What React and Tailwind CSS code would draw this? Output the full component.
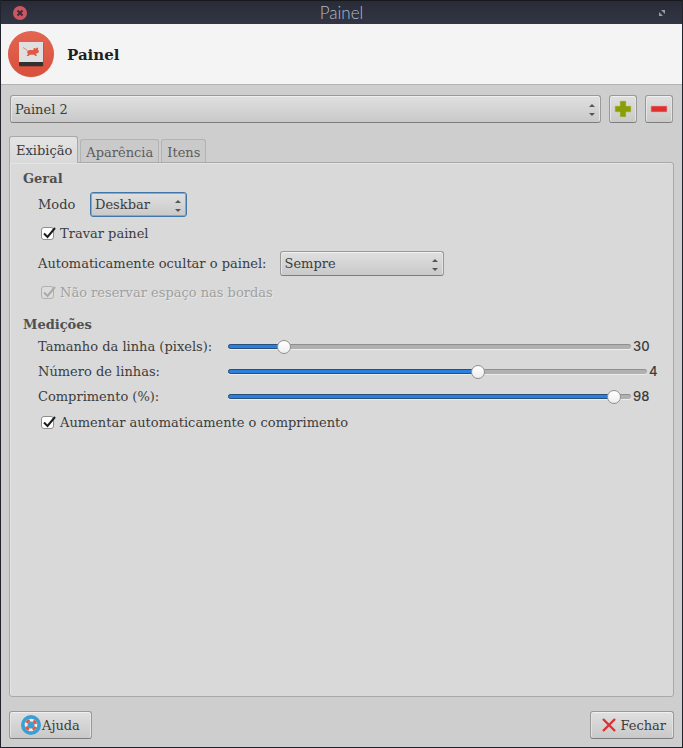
import { useState } from "react";

const BUTTON =
  "rounded-[3px] border border-[#999] border-b-[#7d7d7d] bg-linear-to-b from-[#e0e0e0] to-[#c9c9c9] shadow-[inset_0_1px_0_#f0f0f0,inset_1px_0_0_#e4e4e4,inset_-1px_0_0_#e4e4e4]";

function Select({ id, label, options, className, focused }) {
  return (
    <div className={`relative ${className}`}>
      <select
        id={id}
        aria-label={label}
        className={`${BUTTON} block h-full w-full appearance-none pr-5 pl-1 text-[#3c3c3c] outline-none ${
          focused ? "border-[#4177a8] border-b-[#4177a8] ring-1 ring-[#86a9c8] ring-inset" : ""
        }`}
      >
        {options.map((o) => (
          <option key={o}>{o}</option>
        ))}
      </select>
      <svg
        viewBox="0 0 6 12"
        className="pointer-events-none absolute top-[2px] right-[6px] bottom-0 my-auto h-3 w-[6px]"
        fill="#555"
      >
        <path d="M0 3 L3 0 L6 3Z" />
        <path d="M0 9 L3 12 L6 9Z" />
      </svg>
    </div>
  );
}

function Check({ label, disabled }) {
  const [on, setOn] = useState(true);
  return (
    <label
      className={`flex h-5 items-center gap-[6px] pl-[18px] ${
        disabled ? "text-[#a0a0a0] [text-shadow:1px_1px_0_#e8e8e8]" : ""
      }`}
    >
      <span className="relative block size-[13px]">
        <input
          type="checkbox"
          checked={on}
          disabled={disabled}
          onChange={() => setOn(!on)}
          className="block size-[13px] appearance-none rounded-[3px] border border-[#8e8e8e] bg-white disabled:border-[#b0b0b0] disabled:bg-[#dcdcdc]"
        />
        {on && (
          <svg
            viewBox="0 0 14 14"
            className="pointer-events-none absolute top-0 left-px size-[14px]"
            fill="none"
            stroke={disabled ? "#aaa" : "#1c1c1c"}
            strokeWidth="2"
          >
            <path d="M2 6.5 L5.5 10 L13 1" />
          </svg>
        )}
      </span>
      {label}
    </label>
  );
}

function Slider({ id, label, min, max, initial, valueWidth }) {
  const [value, setValue] = useState(initial);
  const ratio = (value - min) / (max - min);
  const edge = `calc(7px + (100% - 14px) * ${ratio})`;
  return (
    <div className="flex h-[25px] items-center pr-[3px] pl-[15px]">
      <label htmlFor={id} className="w-[190px] shrink-0">
        {label}
      </label>
      <div className="relative flex h-[14px] min-w-0 flex-1 items-center">
        <div className="h-[5px] w-full overflow-hidden rounded-full border-t border-[#8f8f8f] bg-[#b0b0b0] shadow-[0_1px_0_#ececec]" />
        <div
          className="absolute left-0 h-[5px] rounded-l-full border border-[#27517c] bg-[#2a80da]"
          style={{ width: edge }}
        />
        <input
          id={id}
          type="range"
          min={min}
          max={max}
          value={value}
          onChange={(e) => setValue(Number(e.target.value))}
          className="absolute inset-0 h-[14px] w-full appearance-none bg-transparent [&::-webkit-slider-thumb]:size-[14px] [&::-webkit-slider-thumb]:appearance-none [&::-webkit-slider-thumb]:rounded-full [&::-webkit-slider-thumb]:border [&::-webkit-slider-thumb]:border-[#8d8d8d] [&::-webkit-slider-thumb]:bg-white [&::-webkit-slider-thumb]:bg-linear-to-b [&::-webkit-slider-thumb]:from-white [&::-webkit-slider-thumb]:to-[#eee]"
        />
      </div>
      <output
        htmlFor={id}
        className={`${valueWidth} shrink-0 pl-[2px] font-['Inter','Liberation_Sans',sans-serif] font-medium`}
      >
        {value}
      </output>
    </div>
  );
}

function AppIcon() {
  return (
    <svg viewBox="1 0 48 48" className="size-12">
      <defs>
        <linearGradient id="disc" x1="0" y1="0" x2="0" y2="1">
          <stop offset="0" stopColor="#e26552" />
          <stop offset="1" stopColor="#d9503c" />
        </linearGradient>
      </defs>
      <circle cx="25" cy="24.5" r="23" fill="#d2d2d2" />
      <circle cx="25" cy="24" r="23" fill="url(#disc)" />
      <rect x="13.5" y="13" width="24" height="24" rx="1" fill="#b34433" />
      <path d="M13 12H37V32H13Z" fill="#dfdfdf" />
      <path d="M13 32H37V35Q37 36 36 36H14Q13 36 13 35Z" fill="#2e332f" />
      <path
        d="M21.5 21 Q22.5 20 24.5 20 H27.5 Q27 17.8 28.5 18 Q29.5 18 30 19 Q30 17.3 31.5 17.5 Q32.6 18 32 19.5 L33 21.5 Q32.8 23 31 23.2 L30 24 L31 26 H29.5 L28 24.8 H24 L22.5 26 H20.5 L22 24.2 Q20.8 23 21.5 21Z"
        fill="#df5a46"
      />
      <path d="M22 22 Q21.5 19.5 17 17.5" fill="none" stroke="#df8a7c" strokeWidth="1" />
    </svg>
  );
}

export default function App() {
  return (
    <main className="flex min-h-screen flex-col border-x border-b border-[#20232c] bg-[#cecece] font-['DejaVu_Serif','Liberation_Serif',serif] text-[13px] leading-[17px] text-[#3c3c3c]">
      <div className="flex h-6 items-center justify-between border-t border-[#171a1d] bg-linear-to-b from-[#292c37] to-[#323644] px-3">
        <button type="button" aria-label="Fechar janela" className="w-4">
          <svg viewBox="0 0 14 14" className="size-[14px]">
            <circle cx="7" cy="7" r="7" fill="#cb5560" />
            <path d="M4.5 4.5 L9.5 9.5 M9.5 4.5 L4.5 9.5" stroke="#3a2a35" strokeWidth="1.8" />
          </svg>
        </button>
        <h1 className="font-['Lato',sans-serif] text-[17px] leading-5 font-light text-[#b4bbc8]">Painel</h1>
        <button type="button" aria-label="Maximizar" className="flex w-4 justify-center">
          <svg viewBox="0 0 6 6" className="size-[6px]" fill="#979ca8">
            <path d="M2 0H6V4Z" />
            <path d="M0 2V6H4Z" />
          </svg>
        </button>
      </div>

      <header className="flex h-[61px] items-center gap-3 border-b border-[#b4b4b4] bg-[#f4f4f4] pl-[6px]">
        <AppIcon />
        <h2 className="pt-[2px] text-[15px] leading-5 font-bold text-[#1f1f1f]">Painel</h2>
      </header>

      <div className="flex flex-1 flex-col px-2 pb-2">
        <div className="mt-[10px] flex h-7 gap-2 px-px">
          <Select id="painel" label="Painel" options={["Painel 2", "Painel 1"]} className="flex-1" />
          <button type="button" aria-label="Adicionar painel" className={`${BUTTON} flex w-7 items-center justify-center`}>
            <svg viewBox="0 0 18 18" className="size-[18px]">
              <path d="M6 1H12V6H17V12H12V17H6V12H1V6H6Z" fill="#8a9f05" stroke="#c0cb85" strokeWidth="0.6" />
            </svg>
          </button>
          <button type="button" aria-label="Remover painel" className={`${BUTTON} flex w-7 items-center justify-center`}>
            <svg viewBox="0 0 18 18" className="size-[18px]">
              <path d="M1 6H17V12H1Z" fill="#df302f" stroke="#e8a5a0" strokeWidth="0.6" />
            </svg>
          </button>
        </div>

        <div role="tablist" className="z-10 mt-[13px] -mb-px flex items-end gap-[2px]">
          <button
            type="button"
            role="tab"
            aria-selected="true"
            className="h-[27px] rounded-t-[3px] border border-b-0 border-[#a9a9a9] bg-linear-to-b from-[#e4e4e4] to-[#d9d9d9] pr-[5px] pl-[6px]"
          >
            Exibição
          </button>
          <button
            type="button"
            role="tab"
            aria-selected="false"
            className="mb-px h-[23px] rounded-t-[3px] border border-b-0 border-[#b3b3b3] bg-[#cacaca] px-[5px] pt-[2px] text-[#5c5c5c]"
          >
            Aparência
          </button>
          <button
            type="button"
            role="tab"
            aria-selected="false"
            className="mb-px h-[23px] rounded-t-[3px] border border-b-0 border-[#b3b3b3] bg-[#cacaca] px-[5px] pt-[2px] text-[#5c5c5c]"
          >
            Itens
          </button>
        </div>

        <section
          role="tabpanel"
          className="flex flex-1 flex-col rounded-[3px] rounded-tl-none border border-[#a9a9a9] bg-[#d9d9d9] px-[13px] pt-[7px] shadow-[inset_1px_1px_0_#e4e4e4]"
        >
          <h3 className="font-bold text-[#505050]">Geral</h3>
          <div className="mt-[5px] flex h-[25px] items-center pl-[15px]">
            <label htmlFor="modo" className="w-[52px]">
              Modo
            </label>
            <Select id="modo" focused options={["Deskbar", "Horizontal", "Vertical"]} className="h-[25px] w-[97px]" />
          </div>
          <div className="mt-[6px]">
            <Check label="Travar painel" />
          </div>
          <div className="mt-2 flex h-[25px] items-center gap-[13px] pl-[15px]">
            <label htmlFor="ocultar">Automaticamente ocultar o painel:</label>
            <Select id="ocultar" options={["Sempre", "Nunca"]} className="h-[25px] w-[164px]" />
          </div>
          <div className="mt-[6px]">
            <Check label="Não reservar espaço nas bordas" disabled />
          </div>

          <h3 className="mt-[14px] mb-px font-bold text-[#505050]">Medições</h3>
          <Slider id="tamanho" label="Tamanho da linha (pixels):" min={16} max={128} initial={30} valueWidth="w-[26px]" />
          <Slider id="linhas" label="Número de linhas:" min={1} max={6} initial={4} valueWidth="w-[10px]" />
          <Slider id="comprimento" label="Comprimento (%):" min={20} max={100} initial={98} valueWidth="w-[26px]" />
          <div className="mt-[3px]">
            <Check label="Aumentar automaticamente o comprimento" />
          </div>
        </section>

        <footer className="mt-[14px] flex h-7 justify-between">
          <button type="button" className={`${BUTTON} flex items-center gap-px px-[11px]`}>
            <svg viewBox="0 0 20 20" className="size-5">
              <circle cx="10" cy="10" r="10" fill="#3a9fd3" />
              <circle cx="10" cy="10" r="4.9" fill="none" stroke="#f1ece8" strokeWidth="2.8" />
              <circle
                cx="10"
                cy="10"
                r="4.9"
                fill="none"
                stroke="#e2573f"
                strokeWidth="2.8"
                strokeDasharray="3.85 3.85"
                strokeDashoffset="-1.92"
              />
            </svg>
            Ajuda
          </button>
          <button type="button" className={`${BUTTON} flex items-center gap-1 pr-[7px] pl-[11px]`}>
            <svg viewBox="0 0 14 14" className="size-[14px]" stroke="#df302f" strokeWidth="2.4">
              <path d="M1 1 L13 13 M13 1 L1 13" />
            </svg>
            Fechar
          </button>
        </footer>
      </div>
    </main>
  );
}
